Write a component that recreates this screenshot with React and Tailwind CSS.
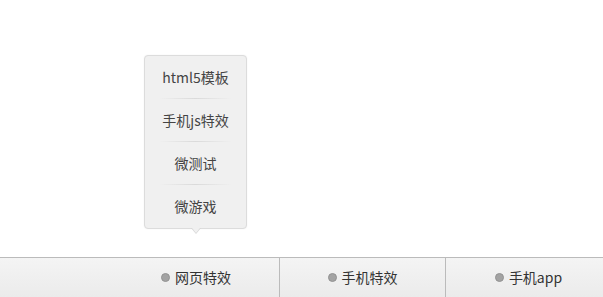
import React from "react";

const font = { fontFamily: '"Microsoft YaHei", "Noto Sans CJK SC", "Noto Sans", sans-serif' };

function Bullet() {
  return (
    <span className="inline-block w-[9px] h-[9px] rounded-full bg-[#a3a3a3] border border-[#939393] mr-[5px]" />
  );
}

const menu = ["html5模板", "手机js特效", "微测试", "微游戏"];

export default function App() {
  return (
    <div className="w-[603px] h-[297px] bg-white flex flex-col overflow-hidden" style={font}>
      <div className="flex-1" />
      <div className="h-[40px] border-t border-[#bbbbbb] bg-gradient-to-b from-[#f4f4f4] to-[#ebebeb] flex pl-[113px]">
        <div className="relative w-[166px] shrink-0 flex items-center justify-center text-[14px] text-[#333]">
          <div className="absolute bottom-[calc(100%+29px)] left-[31px] w-[103px] bg-[#f0f0f0] border border-[#dcdcdc] rounded-[4px] shadow-[0_0_2px_rgba(0,0,0,0.06)]">
            {menu.map((m, i) => (
              <div key={m} className="relative h-[43px] flex items-center justify-center text-[14px] text-[#444]">
                {m}
                {i < menu.length - 1 && (
                  <div className="absolute bottom-0 left-[14px] right-[14px] h-px bg-gradient-to-r from-transparent via-[#dadada] to-transparent" />
                )}
              </div>
            ))}
            <div className="absolute left-1/2 -translate-x-1/2 -bottom-[6px] w-0 h-0 border-l-[5px] border-r-[5px] border-t-[6px] border-l-transparent border-r-transparent border-t-[#d6d6d6]" />
            <div className="absolute left-1/2 -translate-x-1/2 -bottom-[5px] w-0 h-0 border-l-[4px] border-r-[4px] border-t-[5px] border-l-transparent border-r-transparent border-t-[#f0f0f0]" />
          </div>
          <Bullet />
          <span className="-mt-[1px]">网页特效</span>
        </div>
        <div className="w-[166px] shrink-0 border-l border-[#bbbbbb] flex items-center justify-center text-[14px] text-[#333]">
          <Bullet />
          <span className="-mt-[1px]">手机特效</span>
        </div>
        <div className="w-[166px] shrink-0 border-l border-[#bbbbbb] flex items-center justify-center text-[14px] text-[#333]">
          <Bullet />
          <span className="-mt-[1px]">手机app</span>
        </div>
      </div>
    </div>
  );
}
